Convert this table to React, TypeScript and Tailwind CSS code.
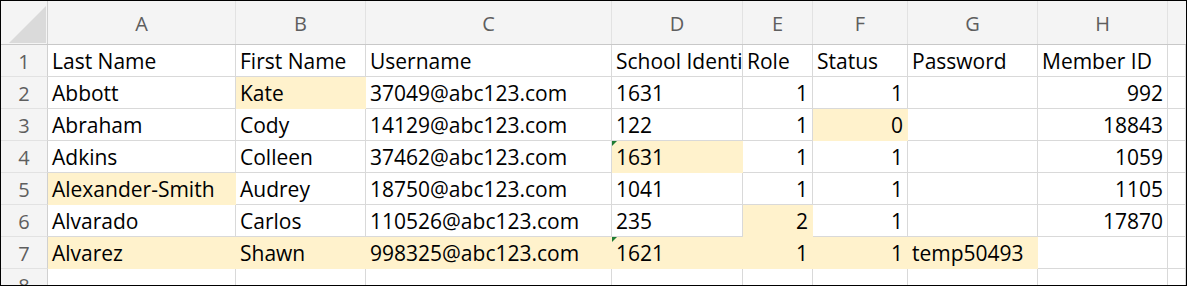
import React from "react";

type Cell = {
  v?: string;
  right?: boolean;
  hl?: boolean;
  flag?: boolean;
};

const columns = [
  { letter: "A", w: "w-[188px]" },
  { letter: "B", w: "w-[130px]" },
  { letter: "C", w: "w-[246px]" },
  { letter: "D", w: "w-[131px]" },
  { letter: "E", w: "w-[70px]" },
  { letter: "F", w: "w-[95px]" },
  { letter: "G", w: "w-[130px]" },
  { letter: "H", w: "w-[130px]" },
  { letter: "", w: "w-[18px]" },
];

const t = (v: string, extra: Partial<Cell> = {}): Cell => ({ v, ...extra });
const n = (v: string, extra: Partial<Cell> = {}): Cell => ({ v, right: true, ...extra });
const e = (extra: Partial<Cell> = {}): Cell => ({ ...extra });

const rows: Cell[][] = [
  [t("Last Name"), t("First Name"), t("Username"), t("School Identifier"), t("Role"), t("Status"), t("Password"), t("Member ID"), e()],
  [t("Abbott"), t("Kate", { hl: true }), t("37049@abc123.com"), t("1631"), n("1"), n("1"), e(), n("992"), e()],
  [t("Abraham"), t("Cody"), t("14129@abc123.com"), t("122"), n("1"), n("0", { hl: true }), e(), n("18843"), e()],
  [t("Adkins"), t("Colleen"), t("37462@abc123.com"), t("1631", { hl: true, flag: true }), n("1"), n("1"), e(), n("1059"), e()],
  [t("Alexander-Smith", { hl: true }), t("Audrey"), t("18750@abc123.com"), t("1041"), n("1"), n("1"), e(), n("1105"), e()],
  [t("Alvarado"), t("Carlos"), t("110526@abc123.com"), t("235"), n("2", { hl: true }), n("1"), e(), n("17870"), e()],
  [
    t("Alvarez", { hl: true }),
    t("Shawn", { hl: true }),
    t("998325@abc123.com", { hl: true }),
    t("1621", { hl: true, flag: true }),
    n("1", { hl: true }),
    n("1", { hl: true }),
    t("temp50493", { hl: true }),
    e(),
    e(),
  ],
];

const font = { fontFamily: "'Open Sans', 'Liberation Sans', sans-serif" };

function GridCell({ cell, width }: { cell: Cell; width: string }) {
  return (
    <div
      className={`relative flex h-[32px] shrink-0 items-center overflow-hidden whitespace-nowrap border-r border-b pt-[2px] text-[21px] text-black ${width} ${
        cell.right ? "justify-end pr-[4px]" : "pl-[4px]"
      } ${cell.hl ? "border-[#fff2cc] bg-[#fff2cc]" : "border-[#d9d9d9] bg-white"}`}
    >
      {cell.flag && (
        <span className="absolute top-0 left-0 h-0 w-0 border-t-[5px] border-r-[5px] border-t-[#1e7b34] border-r-transparent" />
      )}
      {cell.v}
    </div>
  );
}

export default function App() {
  return (
    <div className="h-[286px] w-[1187px] overflow-hidden border border-black bg-white" style={font}>
      <div className="flex h-[44px] border-b border-[#c8c8c8] bg-[#f4f4f4]">
        <div className="relative w-[47px] shrink-0 border-r border-[#d0d0d0]">
          <svg className="absolute top-[5px] left-[8px]" width="37" height="37" viewBox="0 0 37 37">
            <polygon points="0,37 37,0 37,37" fill="#dadada" />
          </svg>
        </div>
        {columns.map((c, i) => (
          <div
            key={i}
            className={`flex shrink-0 items-center justify-center pt-[3px] text-[20px] text-[#5e5e5e] ${c.w} ${
              c.letter ? "border-r border-[#e2e2e2]" : ""
            }`}
          >
            {c.letter}
          </div>
        ))}
      </div>
      {[...rows, []].map((row, r) => (
        <div key={r} className="flex">
          <div className="flex h-[32px] w-[47px] shrink-0 items-center justify-center overflow-hidden border-r border-b border-r-[#d0d0d0] border-b-[#e2e2e2] bg-[#f4f4f4] pt-[2px] text-[20px] text-[#5e5e5e]">
            {r + 1}
          </div>
          {columns.map((c, i) => (
            <GridCell key={i} cell={row[i] ?? {}} width={c.w} />
          ))}
        </div>
      ))}
    </div>
  );
}
